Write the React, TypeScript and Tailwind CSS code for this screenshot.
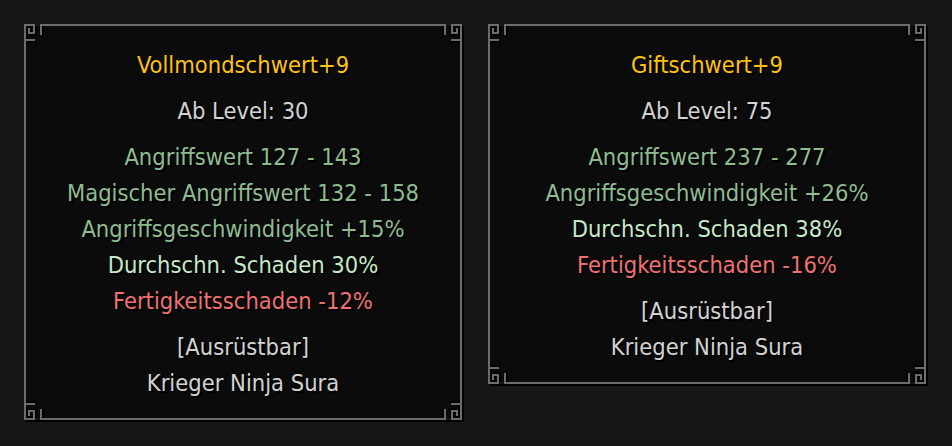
import React from 'react';

type Tone = 'title' | 'plain' | 'stat' | 'bonus' | 'malus';

interface Line {
  text: string;
  tone: Tone;
}

interface Item {
  name: string;
  level: number;
  stats: Line[];
  classes: string;
}

const toneClass: Record<Tone, string> = {
  title: 'text-[#ffc20e]',
  plain: 'text-[#d2d2d2]',
  stat: 'text-[#8fbc8f]',
  bonus: 'text-[#c6e8c6]',
  malus: 'text-[#ec7272]',
};

const items: Item[] = [
  {
    name: 'Vollmondschwert+9',
    level: 30,
    stats: [
      { text: 'Angriffswert 127 - 143', tone: 'stat' },
      { text: 'Magischer Angriffswert 132 - 158', tone: 'stat' },
      { text: 'Angriffsgeschwindigkeit +15%', tone: 'stat' },
      { text: 'Durchschn. Schaden 30%', tone: 'bonus' },
      { text: 'Fertigkeitsschaden -12%', tone: 'malus' },
    ],
    classes: 'Krieger Ninja Sura',
  },
  {
    name: 'Giftschwert+9',
    level: 75,
    stats: [
      { text: 'Angriffswert 237 - 277', tone: 'stat' },
      { text: 'Angriffsgeschwindigkeit +26%', tone: 'stat' },
      { text: 'Durchschn. Schaden 38%', tone: 'bonus' },
      { text: 'Fertigkeitsschaden -16%', tone: 'malus' },
    ],
    classes: 'Krieger Ninja Sura',
  },
];

// meander ornament drawn for the top-left corner, flipped for the others
const ORNAMENT = [
  'M1 20 V1 H10',
  'M1 16 H10',
  'M1 1 H10 V9 H5 V5',
  'M17 1 H20',
  'M17 1 V10',
];

function Corner({ pos }: { pos: 'tl' | 'tr' | 'bl' | 'br' }) {
  const place = {
    tl: '-top-[2px] -left-[2px]',
    tr: '-top-[2px] -right-[2px] -scale-x-100',
    bl: '-bottom-[2px] -left-[2px] -scale-y-100',
    br: '-bottom-[2px] -right-[2px] -scale-x-100 -scale-y-100',
  }[pos];
  return (
    <svg
      width="20"
      height="20"
      viewBox="0 0 20 20"
      className={`absolute ${place}`}
      fill="none"
      strokeWidth="2"
      strokeLinecap="square"
    >
      <rect x="0" y="0" width="20" height="2" fill="#161616" />
      <rect x="0" y="0" width="2" height="20" fill="#161616" />
      <rect x="2" y="2" width="18" height="18" fill="#0b0b0b" />
      {ORNAMENT.map((d) => (
        <path key={d} d={d} stroke="#000" transform="translate(2 2)" />
      ))}
      {ORNAMENT.map((d) => (
        <path key={d + 'g'} d={d} stroke="#6c6c6c" />
      ))}
    </svg>
  );
}

function Text({ line }: { line: Line }) {
  return (
    <div className={`leading-[36px] whitespace-nowrap ${toneClass[line.tone]}`}>{line.text}</div>
  );
}

function Tooltip({ item }: { item: Item }) {
  return (
    <div className="relative w-[438px] border-2 border-[#6c6c6c] bg-[#0b0b0b] pt-[21px] pb-[17px] shadow-[2px_2px_0_#000]">
      <Corner pos="tl" />
      <Corner pos="tr" />
      <Corner pos="bl" />
      <Corner pos="br" />
      <div className="flex flex-col items-center gap-[10px]">
        <Text line={{ text: item.name, tone: 'title' }} />
        <Text line={{ text: `Ab Level: ${item.level}`, tone: 'plain' }} />
        <div className="flex flex-col items-center">
          {item.stats.map((s) => (
            <Text key={s.text} line={s} />
          ))}
        </div>
        <div className="flex flex-col items-center">
          <Text line={{ text: '[Ausrüstbar]', tone: 'plain' }} />
          <Text line={{ text: item.classes, tone: 'plain' }} />
        </div>
      </div>
    </div>
  );
}

export default function App() {
  return (
    <div
      className="w-[952px] h-[446px] bg-[#161616] flex items-start gap-[26px] pt-[24px] pl-[24px] text-[23.5px] [font-stretch:condensed] [text-shadow:2px_2px_0_#000]"
      style={{ fontFamily: '"DejaVu Sans Condensed", "DejaVu Sans", sans-serif' }}
    >
      {items.map((it) => (
        <Tooltip key={it.name} item={it} />
      ))}
    </div>
  );
}
